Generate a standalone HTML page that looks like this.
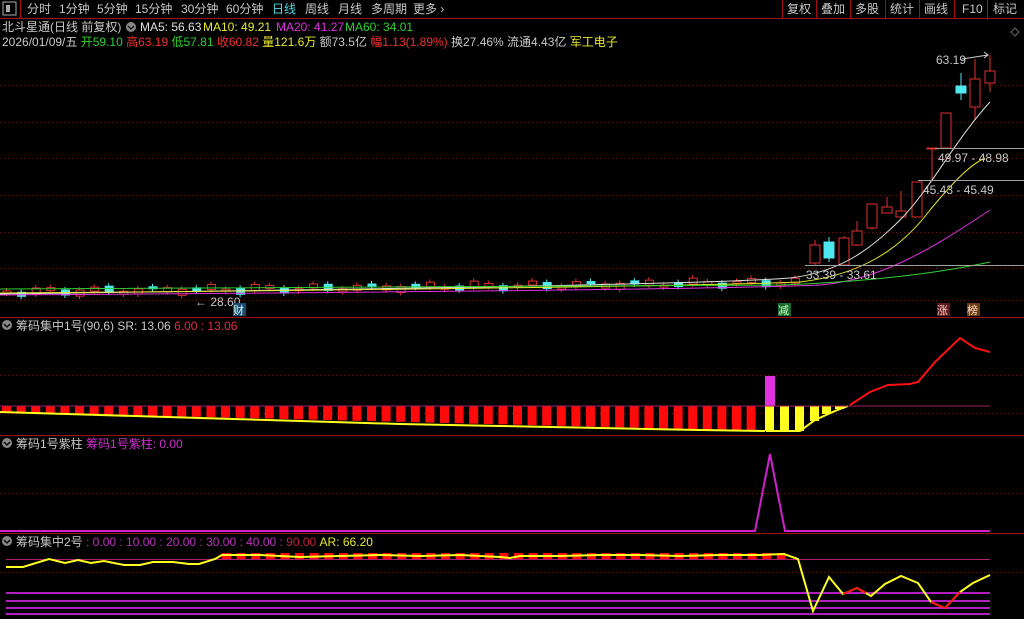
<!DOCTYPE html>
<html><head><meta charset="utf-8">
<style>
html,body{margin:0;padding:0;background:#000;width:1024px;height:619px;overflow:hidden;font-family:"Liberation Sans","Noto Sans CJK SC",sans-serif;}
svg{position:absolute;left:0;top:0}
</style></head><body>
<svg id="s" width="1024" height="619" xmlns="http://www.w3.org/2000/svg" font-family="Liberation Sans, Noto Sans CJK SC, sans-serif" font-size="12">
<rect width="1024" height="619" fill="#000"/>
<!-- toolbar -->
<line x1="0" y1="18.5" x2="1024" y2="18.5" stroke="#a01010"/>
<rect x="3" y="2" width="13" height="13" fill="none" stroke="#aaa"/><rect x="6" y="5" width="4" height="7" fill="#aaa"/>
<line x1="20.5" y1="0" x2="20.5" y2="18" stroke="#a01010"/>
<g fill="#c8c8c8">
<text x="27" y="13">分时</text><text x="59" y="13">1分钟</text><text x="97" y="13">5分钟</text><text x="135" y="13">15分钟</text><text x="181" y="13">30分钟</text><text x="226" y="13">60分钟</text><text x="272" y="13" fill="#4fd8e8">日线</text><text x="305" y="13">周线</text><text x="338" y="13">月线</text><text x="371" y="13">多周期</text><text x="413" y="13">更多 ›</text>
<text x="787" y="13">复权</text><text x="821" y="13">叠加</text><text x="855" y="13">多股</text><text x="890" y="13">统计</text><text x="924" y="13">画线</text><text x="962" y="13">F10</text><text x="993" y="13">标记</text>
</g>
<g stroke="#a01010"><line x1="782.5" y1="0" x2="782.5" y2="18"/><line x1="816.5" y1="0" x2="816.5" y2="18"/><line x1="850.5" y1="0" x2="850.5" y2="18"/><line x1="885.5" y1="0" x2="885.5" y2="18"/><line x1="919.5" y1="0" x2="919.5" y2="18"/><line x1="954.5" y1="0" x2="954.5" y2="18"/><line x1="987.5" y1="0" x2="987.5" y2="18"/></g>
<path d="M1015 28l4 4-4 4-4-4z" fill="none" stroke="#666"/>
<!-- info -->
<text x="2" y="31" fill="#c8c8c8">北斗星通(日线 前复权)</text>
<circle cx="131" cy="27" r="5" fill="#888"/><path d="M128 26l3 3 3-3" stroke="#000" fill="none" stroke-width="1.3"/>
<text x="140" y="31" fill="#e0e0e0">MA5: 56.63</text><text x="203" y="31" fill="#e8e830">MA10: 49.21</text><text x="276" y="31" fill="#e030e0">MA20: 41.27</text><text x="345" y="31" fill="#30d030">MA60: 34.01</text>
<text x="2" y="46" fill="#c8c8c8">2026/01/09/五 <tspan fill="#30d030">开59.10</tspan> <tspan fill="#f03030">高63.19</tspan> <tspan fill="#30d030">低57.81</tspan> <tspan fill="#f03030">收60.82</tspan> <tspan fill="#e8e830">量121.6万</tspan> 额73.5亿 <tspan fill="#f03030">幅1.13(1.89%)</tspan> 换27.46% 流通4.43亿 <tspan fill="#e8e830">军工电子</tspan></text>
<g id="grid" stroke="#6a1414" stroke-dasharray="1,3"></g>
<!-- separators -->
<g stroke="#a01010"><line x1="0" y1="317.5" x2="1024" y2="317.5"/><line x1="0" y1="435.5" x2="1024" y2="435.5"/><line x1="0" y1="533.5" x2="1024" y2="533.5"/></g>
<g id="main"></g>
<!-- grey level lines -->
<g stroke="#a0a0a0"><line x1="935" y1="148.5" x2="1024" y2="148.5"/><line x1="918" y1="180.5" x2="1024" y2="180.5"/><line x1="805" y1="265.5" x2="1024" y2="265.5"/></g>
<g fill="#c8c8c8"><text x="938" y="162">49.97 - 48.98</text><text x="923" y="194">45.43 - 45.49</text><text x="806" y="279">33.39 - 33.61</text><text x="936" y="64">63.19</text><text x="195" y="306">← 28.60</text></g>
<path d="M962 59L988 55M984 52l4 3-4 3" stroke="#ccc" fill="none"/>
<rect x="233" y="303" width="13" height="13" fill="#1a4a70"/><text x="233" y="314" fill="#cfe" font-size="11">财</text>
<rect x="778" y="303" width="13" height="13" fill="#1a6a2a"/><text x="778" y="314" fill="#cfc" font-size="11">减</text>
<rect x="937" y="303" width="13" height="13" fill="#5a1a1a"/><text x="937" y="314" fill="#fcc" font-size="11">涨</text>
<rect x="967" y="303" width="13" height="13" fill="#6a3a10"/><text x="967" y="314" fill="#fdc" font-size="11">榜</text>
<!-- panel headers -->
<circle cx="7" cy="325" r="5" fill="#888"/><path d="M4 324l3 3 3-3" stroke="#000" fill="none" stroke-width="1.3"/>
<text x="16" y="330" fill="#c8c8c8">筹码集中1号(90,6)  SR: 13.06  <tspan fill="#e03040">6.00 : 13.06</tspan></text>
<circle cx="7" cy="443" r="5" fill="#888"/><path d="M4 442l3 3 3-3" stroke="#000" fill="none" stroke-width="1.3"/>
<text x="16" y="448" fill="#c8c8c8">筹码1号紫柱 <tspan fill="#d030d0">筹码1号紫柱: 0.00</tspan></text>
<circle cx="7" cy="541" r="5" fill="#888"/><path d="M4 540l3 3 3-3" stroke="#000" fill="none" stroke-width="1.3"/>
<text x="16" y="546" fill="#c8c8c8">筹码集中2号 <tspan fill="#c030c0">: 0.00 : 10.00 : 20.00 : 30.00 : 40.00 : </tspan><tspan fill="#c02040">90.00</tspan> <tspan fill="#e8e830">AR: 66.20</tspan></text>
<g id="p"></g>
</svg>
<script>
var NS="http://www.w3.org/2000/svg";
function el(p,t,a){var e=document.createElementNS(NS,t);for(var k in a)e.setAttribute(k,a[k]);document.getElementById(p).appendChild(e);return e;}
[85,122,158,195,232,268,300,375,413,493,572].forEach(function(y){el("grid","line",{x1:0,y1:y+.5,x2:1024,y2:y+.5});});
// flat candles
var step=14.6;
for(var i=0;i<55;i++){var x=3+i*step;var base=292-i*0.18+Math.sin(i*1.7)*2.5;var h=2+((i*7)%5);var up=(i%3)!=1;var c=up?"#e03030":"#50e8f0";
if(i==5||i==16){h=6;} 
el("main","line",{x1:x+3.5,y1:base-h/2-3,x2:x+3.5,y2:base+h/2+3,stroke:c});
el("main","rect",{x:x,y:base-h/2,width:8,height:h,fill:up?"#000":c,stroke:c});}
var cs=[[815,245,263,240,265,0],[829,242,258,237,262,1],[844,238,265,236,266,0],[857,231,245,221,246,0],[872,204,228,204,230,0],[887,207,213,197,213,0],[901,211,217,191,217,0],[917,182,217,182,217,0],[932,148,149,148,180,0],[946,113,148,113,148,0],[961,86,93,73,100,1],[975,79,107,59,120,0],[990,71,83,55,92,0]];
cs.forEach(function(c){var col=c[5]?"#50e8f0":"#e03030";el("main","line",{x1:c[0],y1:c[3],x2:c[0],y2:c[4],stroke:col});
el("main","rect",{x:c[0]-5,y:c[1],width:10,height:Math.max(1,c[2]-c[1]),fill:c[5]?col:"#000",stroke:col});});
// MAs
el("main","path",{d:"M0 294 C300 290 700 285 790 278 C840 272 870 250 900 220 C930 190 955 140 990 102",stroke:"#e0e0e0",fill:"none"});
el("main","path",{d:"M0 293 C300 291 700 286 800 282 C860 275 900 250 930 210 C955 180 970 165 985 158",stroke:"#e8e830",fill:"none"});
el("main","path",{d:"M0 295 C300 293 700 290 820 285 C880 280 930 250 990 210",stroke:"#e030e0",fill:"none"});
el("main","path",{d:"M0 289 C300 288 600 286 780 285 C860 282 930 275 990 262",stroke:"#30d030",fill:"none"});
// panel1
for(var i=0;i<52;i++){var x=2+i*step;var bot=412+ (x/765)*19;el("p","rect",{x:x,y:406,width:9,height:bot-406,fill:"#ff0a0a"});}
el("p","path",{d:"M0 412 L100 415 L200 418 L300 421 L400 424 L500 426 L600 428 L700 430 L765 431",stroke:"#ffff20","stroke-width":2,fill:"none"});
var yb=[[765,431],[780,431],[795,431],[810,421],[822,414],[835,409],[845,406]];
yb.forEach(function(b){el("p","rect",{x:b[0],y:406,width:9,height:b[1]-406,fill:"#ffff20"});});
el("p","path",{d:"M766 431 L800 431 L815 420 L835 411 L848 406",stroke:"#ffff20","stroke-width":2,fill:"none"});
el("p","rect",{x:765,y:376,width:10,height:30,fill:"#e030e0"});
el("p","line",{x1:0,y1:406,x2:990,y2:406,stroke:"#a02060"});
el("p","path",{d:"M850 405 L870 392 L888 385 L910 384 L918 382 L935 362 L960 338 L975 348 L990 352",stroke:"#ff1010","stroke-width":2,fill:"none"});
// panel2
el("p","path",{d:"M0 531 L755 531 L770 454 L785 531 L990 531",stroke:"#d020d0","stroke-width":2,fill:"none"});
// panel3
el("p","line",{x1:6,y1:559.5,x2:990,y2:559.5,stroke:"#b02070"});
[593,601,608,614].forEach(function(y){el("p","line",{x1:6,y1:y,x2:990,y2:y,stroke:"#b020c0","stroke-width":2});});
for(var i=0;i<40;i++){var x=222+i*step;if(x>790)break;el("p","rect",{x:x,y:553,width:9,height:6,fill:"#ff0a0a"});}
el("p","path",{d:"M6 567 L23 567 L49 559 L65 563 L78 560 L91 563 L104 561 L124 565 L140 565 L153 562 L173 562 L189 564 L199 564 L215 559 L222 555 L260 555 L300 557 L340 556 L380 555 L420 556 L460 555 L500 557 L510 558 L520 556 L560 556 L600 555 L640 555 L680 556 L720 555 L760 555 L784 554 L798 559 L813 611 L829 577 L843 594 L857 588 L871 596 L885 584 L901 576 L918 583 L931 602 L945 608 L960 592 L973 583 L990 575",stroke:"#ffff20","stroke-width":2,fill:"none"});
el("p","path",{d:"M843 594 L857 588 L866 593",stroke:"#ff1010","stroke-width":2,fill:"none"});
el("p","path",{d:"M931 602 L945 608 L960 592",stroke:"#ff1010","stroke-width":2,fill:"none"});
</script>
</body></html>
